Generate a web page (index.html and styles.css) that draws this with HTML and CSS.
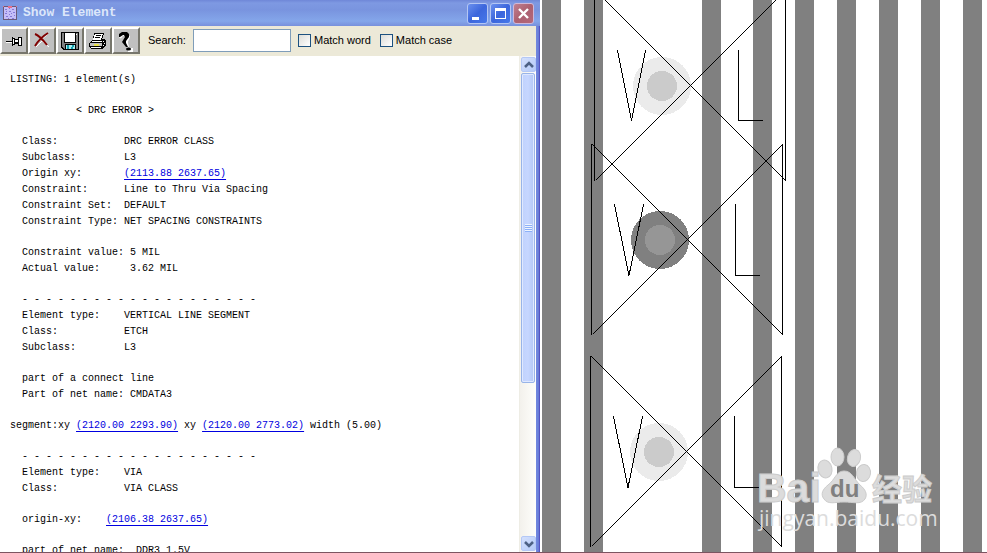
FILE: index.html
```html
<!DOCTYPE html>
<html lang="en">
<head>
<meta charset="utf-8">
<title>Show Element</title>
<link rel="stylesheet" href="styles.css">
</head>
<body>
<main class="workspace">
  <section class="dialog">
    <header class="titlebar">
      <svg class="app-icon" width="14" height="14" viewBox="0 0 14 14" shape-rendering="crispEdges">
        <rect width="14" height="14" fill="#6a5a78"/>
        <rect x="1" y="1" width="12" height="12" fill="#c4bdf8"/>
        <path d="M2 3h2M6 2h1M9 3h2M3 5h1M6 5h2M10 6h2M2 7h2M6 8h1M8 7h1M3 10h2M7 10h2M11 9h1M5 12h1M9 12h2" stroke="#8478d8"/>
        <path d="M5 1h4M0 0h1M13 0h1" stroke="#e8708c" stroke-width="2"/>
      </svg>
      <h1 class="title">Show Element</h1>
      <div class="window-buttons">
        <button class="win-btn" type="button" aria-label="Minimize"><svg width="19" height="19"><path d="M4 13h7v3H4z" fill="#fff"/></svg></button>
        <button class="win-btn" type="button" aria-label="Maximize"><svg width="19" height="19"><path d="M4 4h11v11H4zM5 7v7h9V7z" fill="#fff" fill-rule="evenodd"/></svg></button>
        <button class="win-btn close" type="button" aria-label="Close"><svg width="19" height="19"><path d="M5 5l9 9M14 5l-9 9" stroke="#fff" stroke-width="2.4"/></svg></button>
      </div>
    </header>

    <div class="toolbar">
      <div class="tools">
        <button class="tool" type="button" aria-label="Pin">
          <svg width="24" height="24" viewBox="0 0 24 24" shape-rendering="crispEdges">
            <path d="M10 9h3v1h4V8h3v9h-3v-2h-4v1h-3zM4 13h6v1H4z" fill="#fff"/>
            <path d="M4 12h6v1H4zM10 8h1v9h-1zM11 9h2v1h-2zM11 15h2v1h-2zM12 10h1v5h-1zM13 10h4v1h-4zM13 13h4v2h-4zM16 8h1v9h-1zM17 8h3v1h-3zM17 16h3v1h-3zM19 8h1v9h-1z"/>
          </svg>
        </button>
        <button class="tool" type="button" aria-label="Close listing">
          <svg width="24" height="24" viewBox="0 0 24 24">
            <path d="M7 5l5 5 6-5M6 18l6-6 7 6" fill="none" stroke="#fff"/>
            <path d="M5 5c3 1 8 6 12 11M18 4C13 7 8 12 5 17" fill="none" stroke="#800000" stroke-width="2"/>
          </svg>
        </button>
        <button class="tool" type="button" aria-label="Save">
          <svg width="24" height="24" viewBox="0 0 24 24" shape-rendering="crispEdges">
            <path d="M3 3h18v18H5l-2-2z" fill="#000"/><path d="M4 4h16v16H6l-2-2z" fill="#808080"/>
            <path d="M6 3h12v11H6z" fill="#000"/><path d="M7 4h10v9H7z" fill="#fff"/>
            <path d="M7 15h11v6H7z" fill="#000"/><path d="M8 16h9v4H8z" fill="#a8eef0"/>
            <path d="M9 16h2v4H9zM14 16h2v2h-2zM13 18h2v2h-2z" fill="#18a0ac"/><path d="M18 5h1v1h-1z" fill="#fff"/>
          </svg>
        </button>
        <button class="tool" type="button" aria-label="Print">
          <svg width="24" height="24" viewBox="0 0 24 24" shape-rendering="crispEdges">
            <path d="M8 4h10v1l-2 5h3l1 2v5l-4 3H5l-2-3v-3l4-4z" fill="#000"/>
            <path d="M9 5h8l-2 6H7z" fill="#fff"/><path d="M10 6h5v1h-5zM9 8h5v1H9z" fill="#000"/>
            <path d="M6 12h10v1H6zM5 18h10v1H5z" fill="#fff"/>
            <path d="M4 14h12v3H4z" fill="#c0c0c0"/><path d="M8 15h5v2H8z" fill="#e8e050"/>
            <path d="M17 12h1v1h-1zM18 14h1v1h-1zM17 16h1v1h-1z" fill="#fff"/>
          </svg>
        </button>
        <button class="tool" type="button" aria-label="Help">
          <svg width="24" height="24" viewBox="0 0 24 24">
            <path d="M6 9c2-4 5-4 7-3M15 7c0 4-3 4-2 7l1 4M14 22h4v-3" fill="none" stroke="#fff" stroke-width="2"/>
            <path d="M5 8V5l3-2h5l2 2v3l-3 4v2l2 4h-2l-4-5 3-5-1-2H9L6 8z" fill="#000"/>
            <ellipse cx="14.5" cy="20" rx="2.5" ry="1.5"/>
          </svg>
        </button>
      </div>
      <label class="label" for="search">Search:</label>
      <input class="search" id="search" type="text">
      <label class="check"><input type="checkbox">Match word</label>
      <label class="check"><input type="checkbox">Match case</label>
    </div>

    <div class="body">
      <article class="listing">
        <div class="group"><p>LISTING: 1 element(s)</p></div>
        <div class="group"><p>           &lt; DRC ERROR &gt;</p></div>
        <div class="group">
          <p>  Class:           DRC ERROR CLASS</p>
          <p>  Subclass:        L3</p>
          <p>  Origin xy:       <a href="#">(2113.88 2637.65)</a></p>
          <p>  Constraint:      Line to Thru Via Spacing</p>
          <p>  Constraint Set:  DEFAULT</p>
          <p>  Constraint Type: NET SPACING CONSTRAINTS</p>
        </div>
        <div class="group">
          <p>  Constraint value: 5 MIL</p>
          <p>  Actual value:     3.62 MIL</p>
        </div>
        <div class="group">
          <p>  - - - - - - - - - - - - - - - - - - - -</p>
          <p>  Element type:    VERTICAL LINE SEGMENT</p>
          <p>  Class:           ETCH</p>
          <p>  Subclass:        L3</p>
        </div>
        <div class="group">
          <p>  part of a connect line</p>
          <p>  Part of net name: CMDATA3</p>
        </div>
        <div class="group"><p>segment:xy <a href="#">(2120.00 2293.90)</a> xy <a href="#">(2120.00 2773.02)</a> width (5.00)</p></div>
        <div class="group">
          <p>  - - - - - - - - - - - - - - - - - - - -</p>
          <p>  Element type:    VIA</p>
          <p>  Class:           VIA CLASS</p>
        </div>
        <div class="group"><p>  origin-xy:    <a href="#">(2106.38 2637.65)</a></p></div>
        <div class="group"><p>  part of net name:  DDR3_1.5V</p></div>
      </article>
      <div class="scrollbar">
        <button class="scroll-btn" type="button" aria-label="Scroll up"><svg width="12" height="12"><path d="M2 8l4-4 4 4" fill="none" stroke="#4d6185" stroke-width="2.5"/></svg></button>
        <div class="track"><div class="thumb"><span class="grip"></span></div></div>
        <button class="scroll-btn" type="button" aria-label="Scroll down"><svg width="12" height="12"><path d="M2 4l4 4 4-4" fill="none" stroke="#4d6185" stroke-width="2.5"/></svg></button>
      </div>
    </div>
  </section>

  <section class="board" aria-label="Board view">
    <svg class="board-art" width="100%" height="100%">
      <g fill="#808080">
        <rect x="2" width="19" height="100%"/><rect x="44" width="19" height="100%"/>
        <rect x="162" width="19" height="100%"/><rect x="213" width="19" height="100%"/>
        <rect x="255" width="19" height="100%"/><rect x="297" width="19" height="100%"/>
        <rect x="339" width="19" height="100%"/><rect x="381" width="19" height="100%"/>
        <rect x="423" width="19" height="100%"/>
      </g>
      <g shape-rendering="crispEdges">
        <circle cx="122" cy="86" r="29" fill="#ebebeb"/><circle cx="122" cy="86" r="15" fill="#cbcbcb"/>
        <circle cx="120" cy="240" r="29" fill="#808080"/><circle cx="120" cy="240" r="15" fill="#969696"/>
        <circle cx="119" cy="452" r="29" fill="#ebebeb"/><circle cx="119" cy="452" r="15" fill="#cbcbcb"/>
      </g>
      <g fill="none" stroke="#000" shape-rendering="crispEdges">
        <path d="M54.5 -10V181M245.5 -10V181M55.5 180.5l190-190M55.5 -9.5l190 190"/>
        <path d="M51.5 144V335M242.5 144V335M52.5 334.5l190-190M52.5 144.5l190 190"/>
        <path d="M50.5 356V547M241.5 356V547M51.5 546.5l190-190M51.5 356.5l190 190"/>
        <path d="M77.500 50.500l14 70 14-70M198.500 50v70.500H223"/>
        <path d="M74.500 204.500l14.500 71 14.500-71M195.500 204v71.500H220"/>
        <path d="M73.500 416.500l14.500 71 14.500-71M194.500 416v71.500H219"/>
      </g>
      <g class="watermark">
        <text class="wm-brand" x="217" y="502">Bai</text>
        <ellipse cx="285" cy="469" rx="7" ry="9" transform="rotate(-12 285 469)"/>
        <ellipse cx="297.5" cy="457" rx="6.5" ry="9"/>
        <ellipse cx="314" cy="458" rx="6.5" ry="8.5" transform="rotate(15 314 458)"/>
        <ellipse cx="323.5" cy="473" rx="7" ry="8.5" transform="rotate(8 323.5 473)"/>
        <path d="M304 471c8 0 10 8 16 14 5 4 8 9 5 14-4 6-12 3-21 3s-16 3-20-3c-4-5-1-10 4-14 7-5 8-14 16-14z"/>
        <text class="wm-du" x="290" y="497">du</text>
        <text class="wm-cjk" x="332" y="500">经验</text>
        <text class="wm-url" x="219" y="526">jingyan.baidu.com</text>
      </g>
    </svg>
  </section>
</main>
</body>
</html>
```
FILE: styles.css
```css
* { box-sizing: border-box; }

body {
  margin: 0;
  background: #fff;
  color: #000;
  font: 11px/16px "Liberation Sans", sans-serif;
}

button { padding: 0; font: inherit; }

.workspace {
  display: grid;
  grid-template-columns: minmax(0, 540px) minmax(0, 1fr);
  height: 100vh;
  border-bottom: 1px solid #7c5561;
  overflow: hidden;
}

.dialog {
  display: flex;
  flex-direction: column;
  min-height: 0;
  background: linear-gradient(90deg, #7288e0, #6a80d8 60%, #4a40b8) right / 4px 100% no-repeat;
}

.titlebar {
  display: flex;
  align-items: center;
  flex: none;
  gap: 6px;
  height: 26px;
  padding: 0 6px 0 3px;
  background: linear-gradient(#6f87d8 0, #7e99e2 3px, #7994df 10px, #84a6ea 21px, #7890dc 26px);
}

.app-icon { flex: none; }

.title {
  flex: 1;
  margin: 0;
  color: #dce7fa;
  font: bold 13px/16px "Liberation Mono", monospace;
}

.window-buttons { display: flex; gap: 2px; }

.win-btn {
  width: 21px;
  height: 21px;
  border: 1px solid #b4c6f4;
  border-radius: 3px;
  background: linear-gradient(135deg, #6b90ee, #3c66dc 50%, #4678ea);
}

.win-btn svg, .tool svg, .scroll-btn svg { display: block; margin: auto; }

.win-btn.close {
  border-color: #d0b8d8;
  background: linear-gradient(135deg, #c08090, #ac6070 50%, #b4687a);
}

.toolbar {
  display: flex;
  align-items: center;
  flex: none;
  height: 30px;
  margin-right: 4px;
  padding-bottom: 2px;
  background: #ece9d8;
}

.tools { display: flex; margin-right: 8px; }

.tool {
  width: 28px;
  height: 27px;
  border: 2px solid;
  border-color: #fff #77766c #77766c #fff;
  background: #c0c0c0;
}

.label { width: 45px; }

.search {
  width: 98px;
  height: 23px;
  margin-right: 7px;
  border: 1px solid #7f9db9;
  background: #fff;
}

.check {
  display: flex;
  align-items: center;
  gap: 3px;
  margin-right: 9px;
}

.check input {
  appearance: none;
  width: 13px;
  height: 13px;
  margin: 0;
  border: 1px solid #1c5180;
  background: linear-gradient(135deg, #dcdcd7, #fff);
}

.body {
  display: flex;
  flex: 1;
  min-height: 0;
  margin-right: 4px;
  background: #fff;
}

.listing {
  display: flex;
  flex-direction: column;
  flex: 1;
  gap: 15px;
  min-width: 0;
  padding: 16px 0 0 10px;
  overflow: hidden;
  font: 10px/16px "Liberation Mono", monospace;
}

.group { flex: none; }
.group p { margin: 0; white-space: pre; }

.listing a {
  color: #0000e0;
  text-decoration: underline;
  text-underline-offset: 3px;
}

.scrollbar {
  display: flex;
  flex-direction: column;
  flex: none;
  width: 17px;
  padding: 1px;
  border-left: 1px solid #eeede5;
  background: linear-gradient(90deg, #f3f1ec, #fefefb);
}

.scroll-btn {
  flex: none;
  width: 15px;
  height: 15px;
  border: 1px solid #b4c8f6;
  border-radius: 2px;
  background: linear-gradient(135deg, #d4e0fd, #b4caf8);
}

.track { flex: 1; min-height: 0; padding-top: 1px; }

.thumb {
  display: grid;
  place-items: center;
  height: 67%;
  border: 1px solid #98b4e8;
  border-radius: 2px;
  box-shadow: inset 0 0 0 1px #dfe8ff;
  background: linear-gradient(90deg, #c0d2fd, #c6d6ff 50%, #b2c8f6);
}

.grip {
  width: 7px;
  height: 8px;
  background: repeating-linear-gradient(#eef4fe 0 1px, #8cb0f8 1px 2px);
}

.board { min-width: 0; overflow: hidden; }
.board-art { display: block; }

.watermark {
  fill: #dcdcdc;
  stroke: #cccccc;
  stroke-width: 1px;
}

.wm-brand { font: bold 41px "Liberation Sans", sans-serif; }
.wm-du { fill: #808080; stroke: none; font: bold 24px "Liberation Sans", sans-serif; }
.wm-cjk { font: bold 30px "Noto Sans CJK SC", sans-serif; }
.wm-url { stroke: none; font: 21px "Open Sans", sans-serif; }
```
